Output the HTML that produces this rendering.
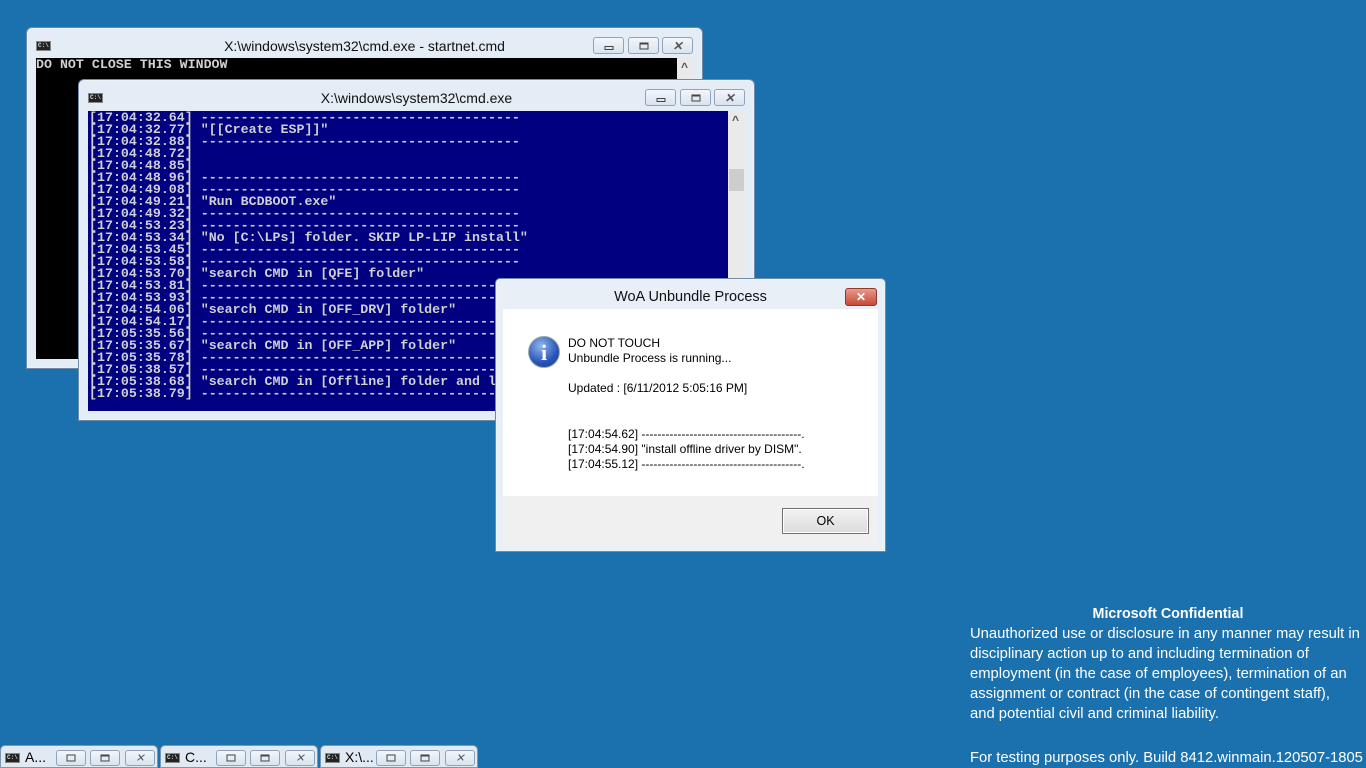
<!DOCTYPE html>
<html><head><meta charset="utf-8"><style>
*{margin:0;padding:0;box-sizing:border-box}
body{width:1366px;height:768px;background:#1a71ae;position:relative;overflow:hidden;font-family:"Liberation Sans",sans-serif}
.win{position:absolute;background:#e4ecf5;border:1px solid #6f8aa6;border-radius:6px 6px 0 0;box-shadow:0 0 0 1px rgba(255,255,255,.3) inset}
.title{position:absolute;left:0;right:0;top:2px;height:30px;text-align:center;font-size:14px;line-height:32px;color:#111}
.ico{position:absolute;left:9px;top:13px;width:15px;height:10px;background:#222;border:1px solid #888;color:#ddd;font-size:6px;line-height:8px;font-family:"Liberation Mono",monospace;font-weight:bold;text-align:left;padding-left:1px}
.btn{position:absolute;top:9px;height:17px;border:1px solid #8fa3ba;border-radius:3px;background:linear-gradient(#f2f6fb,#d9e3ef)}
.btn i{position:absolute;left:50%;top:50%;transform:translate(-50%,-50%);display:block}
.con{position:absolute;font-family:"Liberation Mono",monospace;font-weight:bold;font-size:13.3px;line-height:12px;white-space:pre;overflow:hidden;color:#d0d0d0}
.sb{position:absolute;background:#eaeaea;width:17px}
.sb:before{content:"^";position:absolute;left:4px;top:2px;font-size:12px;color:#555;font-weight:bold}
.conf{position:absolute;left:970px;top:604px;width:396px;color:#fff;font-size:14.8px;line-height:20px;white-space:nowrap}
.tb{position:absolute;top:745px;width:158px;height:23px;background:#e1e9f3;border:1px solid #7e96b0;border-radius:5px 5px 0 0}
.tb .btn{top:4px;height:16px;width:30px}
</style></head><body>

<div class="win" style="left:26px;top:27px;width:677px;height:342px">
 <div class="ico">C:\</div>
 <div class="title">X:\windows\system32\cmd.exe - startnet.cmd</div>
 <div class="btn" style="left:566px;width:31px"><i style="width:9px;height:4px;border:1px solid #444;margin-top:2px"></i></div>
 <div class="btn" style="left:601px;width:31px"><i style="width:9px;height:7px;border:1px solid #444;border-top-width:2px"></i></div>
 <div class="btn" style="left:635px;width:31px"><i style="font-size:12px;color:#555;font-weight:bold">✕</i></div>
 <div class="con" style="left:9px;top:30px;width:641px;height:301px;background:#000;padding-top:1px">DO NOT CLOSE THIS WINDOW</div>
 <div class="sb" style="left:650px;top:30px;height:301px"></div>
</div>

<div class="win" style="left:78px;top:79px;width:677px;height:342px">
 <div class="ico">C:\</div>
 <div class="title">X:\windows\system32\cmd.exe</div>
 <div class="btn" style="left:566px;width:31px"><i style="width:9px;height:4px;border:1px solid #444;margin-top:2px"></i></div>
 <div class="btn" style="left:601px;width:31px"><i style="width:9px;height:7px;border:1px solid #444;border-top-width:2px"></i></div>
 <div class="btn" style="left:635px;width:31px"><i style="font-size:12px;color:#555;font-weight:bold">✕</i></div>
 <div class="con" style="left:9px;top:31px;width:640px;height:300px;background:#000080;padding-top:1px;padding-left:1px">[17:04:32.64] ----------------------------------------
[17:04:32.77] "[[Create ESP]]"
[17:04:32.88] ----------------------------------------
[17:04:48.72]
[17:04:48.85]
[17:04:48.96] ----------------------------------------
[17:04:49.08] ----------------------------------------
[17:04:49.21] "Run BCDBOOT.exe"
[17:04:49.32] ----------------------------------------
[17:04:53.23] ----------------------------------------
[17:04:53.34] "No [C:\LPs] folder. SKIP LP-LIP install"
[17:04:53.45] ----------------------------------------
[17:04:53.58] ----------------------------------------
[17:04:53.70] "search CMD in [QFE] folder"
[17:04:53.81] ----------------------------------------
[17:04:53.93] ----------------------------------------
[17:04:54.06] "search CMD in [OFF_DRV] folder"
[17:04:54.17] ----------------------------------------
[17:05:35.56] ----------------------------------------
[17:05:35.67] "search CMD in [OFF_APP] folder"
[17:05:35.78] ----------------------------------------
[17:05:38.57] ----------------------------------------
[17:05:38.68] "search CMD in [Offline] folder and l
[17:05:38.79] ----------------------------------------</div>
 <div class="sb" style="left:649px;top:31px;height:300px"><div style="position:absolute;left:1px;top:58px;width:15px;height:22px;background:#cdcdcd"></div></div>
</div>

<div class="win" style="left:495px;top:278px;width:391px;height:274px;background:#e8eff7;border-radius:5px 5px 0 0">
 <div class="title" style="font-size:14.5px;line-height:36px;height:30px;top:0">WoA Unbundle Process</div>
 <div style="position:absolute;left:349px;top:9px;width:32px;height:18px;border:1px solid #8d3a2e;border-radius:3px;background:linear-gradient(#e79a8a,#c7493a);color:#fff;text-align:center;font-size:12px;line-height:16px;font-weight:bold">✕</div>
 <div style="position:absolute;left:7px;top:30px;width:375px;height:237px;background:#f0f0f0">
  <div style="position:absolute;left:0;top:0;width:375px;height:187px;background:#fff"></div>
  <div style="position:absolute;left:25px;top:27px;width:32px;height:32px;border-radius:50%;background:radial-gradient(circle at 40% 30%,#8fb6ee,#2a55b8 60%,#173a8a);border:1px solid #9aa;color:#fff;text-align:center;font:bold 22px/31px 'Liberation Serif',serif">i</div>
  <div style="position:absolute;left:65px;top:27px;font-size:12px;line-height:15px;color:#000">DO NOT TOUCH<br>Unbundle Process is running...<br><br style="line-height:7px">Updated : [6/11/2012 5:05:16 PM]</div>
  <div style="position:absolute;left:65px;top:118px;font-size:12px;line-height:15px;color:#000;white-space:pre">[17:04:54.62] ----------------------------------------.
[17:04:54.90] "install offline driver by DISM".
[17:04:55.12] ----------------------------------------.</div>
  <div style="position:absolute;left:279px;top:199px;width:87px;height:26px;border:1px solid #707070;background:linear-gradient(#f2f2f2,#dcdcdc);text-align:center;font-size:12.5px;line-height:24px;box-shadow:inset 0 0 0 1px #fff">OK</div>
 </div>
</div>

<div class="conf"><div style="text-align:center;font-weight:bold;font-size:14.3px">Microsoft Confidential</div>Unauthorized use or disclosure in any manner may result in<br>disciplinary action up to and including termination of<br>employment (in the case of employees), termination of an<br>assignment or contract (in the case of contingent staff),<br>and potential civil and criminal liability.<br><br><span style="position:relative;top:4px">For testing purposes only. Build 8412.winmain.120507-1805</span></div>

<div class="tb" style="left:0"><div class="ico" style="left:4px;top:7px">C:\</div><span style="position:absolute;left:24px;top:3px;font-size:14px">A...</span>
 <div class="btn" style="left:55px"><i style="width:9px;height:7px;border:1px solid #444"></i></div><div class="btn" style="left:89px"><i style="width:9px;height:7px;border:1px solid #444;border-top-width:2px"></i></div><div class="btn" style="left:124px"><i style="font-size:11px;color:#555">✕</i></div></div>
<div class="tb" style="left:160px"><div class="ico" style="left:4px;top:7px">C:\</div><span style="position:absolute;left:24px;top:3px;font-size:14px">C...</span>
 <div class="btn" style="left:55px"><i style="width:9px;height:7px;border:1px solid #444"></i></div><div class="btn" style="left:89px"><i style="width:9px;height:7px;border:1px solid #444;border-top-width:2px"></i></div><div class="btn" style="left:124px"><i style="font-size:11px;color:#555">✕</i></div></div>
<div class="tb" style="left:320px"><div class="ico" style="left:4px;top:7px">C:\</div><span style="position:absolute;left:24px;top:3px;font-size:14px">X:\...</span>
 <div class="btn" style="left:55px"><i style="width:9px;height:7px;border:1px solid #444"></i></div><div class="btn" style="left:89px"><i style="width:9px;height:7px;border:1px solid #444;border-top-width:2px"></i></div><div class="btn" style="left:124px"><i style="font-size:11px;color:#555">✕</i></div></div>
</body></html>
